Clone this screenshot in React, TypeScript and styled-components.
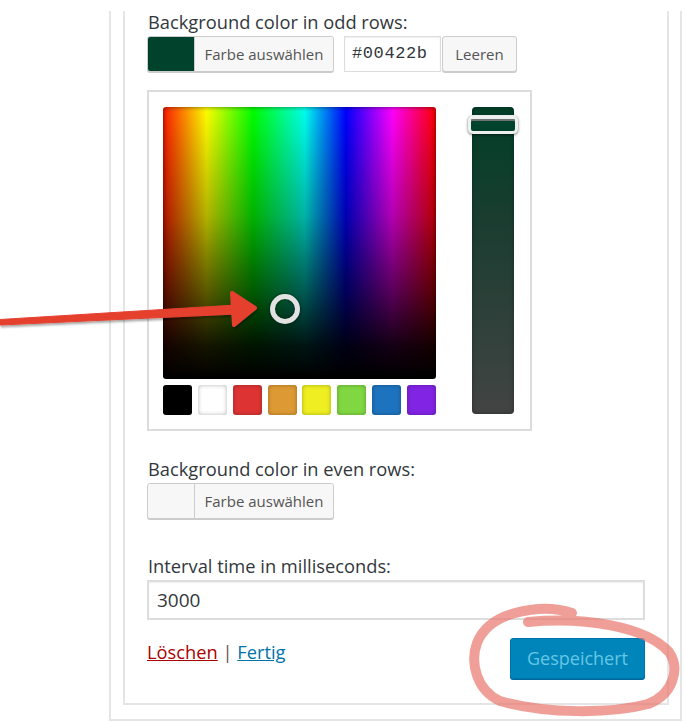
import styled, { createGlobalStyle } from 'styled-components';

const GlobalStyle = createGlobalStyle`
  html, body {
    margin: 0;
    padding: 0;
    background: #fff;
  }
  body {
    font-family: 'Open Sans', 'Noto Sans', sans-serif;
    color: #32373c;
  }
`;

const Page = styled.div`
  position: relative;
  width: 685px;
  height: 722px;
  overflow: hidden;
`;

const Widget = styled.div`
  box-sizing: border-box;
  width: 573px;
  margin-left: 109px;
  padding: 0 11px 14px 12px;
  border: 2px solid #e5e5e5;
  border-top: none;
`;

const WidgetInside = styled.div`
  box-sizing: border-box;
  padding: 0 22px 24px 22px;
  border: 2px solid #e5e5e5;
  border-top: none;
`;

const Label = styled.div<{ $top: number }>`
  margin-top: ${(p) => p.$top}px;
  margin-bottom: 3px;
  padding-left: 1px;
  font-size: 18.3px;
  line-height: 22px;
  color: #32373c;
`;

const ColorRow = styled.div`
  display: flex;
  align-items: flex-start;
  height: 37px;
`;

const ColorButton = styled.div`
  box-sizing: border-box;
  display: flex;
  width: 187px;
  height: 36px;
  border: 1px solid #ccc;
  border-radius: 3px;
  box-shadow: 0 1px 0 #ccc;
  overflow: hidden;
  background: #f7f7f7;
`;

const Swatch = styled.div<{ $color: string }>`
  width: 46px;
  background: ${(p) => p.$color};
`;

const ColorText = styled.span`
  flex: 1;
  border-left: 1px solid #ccc;
  background: #f7f7f7;
  color: #555;
  font-size: 15px;
  line-height: 34px;
  text-align: center;
`;

const HexInput = styled.div`
  box-sizing: border-box;
  width: 97px;
  height: 36px;
  margin-left: 10px;
  padding-left: 7px;
  border: 1px solid #ddd;
  box-shadow: inset 0 1px 2px rgba(0, 0, 0, 0.07);
  font-family: 'Liberation Mono', 'DejaVu Sans Mono', monospace;
  font-size: 17px;
  letter-spacing: 0.6px;
  line-height: 33px;
  color: #32373c;
`;

const ClearButton = styled.div`
  box-sizing: border-box;
  width: 75px;
  height: 36px;
  margin-left: 1px;
  border: 1px solid #ccc;
  border-radius: 3px;
  box-shadow: 0 1px 0 #ccc;
  background: #f7f7f7;
  color: #555;
  font-size: 15px;
  line-height: 34px;
  text-align: center;
`;

const Picker = styled.div`
  box-sizing: border-box;
  display: flex;
  justify-content: space-between;
  width: 385px;
  margin-top: 17px;
  padding: 15px 16px 14px 14px;
  border: 2px solid #dcdcdc;
`;

const PickerMain = styled.div`
  display: flex;
  flex-direction: column;
  gap: 6px;
  width: 273px;
`;

const Square = styled.div`
  position: relative;
  height: 272px;
  border-radius: 3px;
  background:
    linear-gradient(
      to bottom,
      rgba(0, 0, 0, 0) 0%,
      rgba(0, 0, 0, 0.3) 40%,
      rgba(0, 0, 0, 0.65) 68%,
      rgba(0, 0, 0, 0.92) 88%,
      #000 100%
    ),
    linear-gradient(
      to right,
      #ff1a00 0%,
      #ffff00 16%,
      #00ff00 33%,
      #00ffee 52%,
      #0000ff 67%,
      #ff00ff 84%,
      #ff0000 100%
    );
  box-shadow: inset 0 0 5px rgba(0, 0, 0, 0.55);
`;

const SquareHandle = styled.div`
  position: absolute;
  left: 107px;
  top: 187px;
  box-sizing: border-box;
  width: 30px;
  height: 30px;
  border: 5px solid #e2e2e2;
  border-radius: 50%;
  box-shadow: 0 0 3px rgba(0, 0, 0, 0.5), inset 0 0 3px rgba(0, 0, 0, 0.5);
`;

const Palette = styled.div`
  display: flex;
  justify-content: space-between;
`;

const PaletteSwatch = styled.div<{ $color: string }>`
  width: 29px;
  height: 30px;
  border-radius: 3px;
  background: ${(p) => p.$color};
  box-shadow: inset 0 0 4px rgba(0, 0, 0, 0.3);
`;

const Slider = styled.div`
  position: relative;
  width: 42px;
  height: 307px;
  border-radius: 4px;
  background: linear-gradient(to bottom, #003f28 0%, #1c3d31 40%, #424443 100%);
  box-shadow: inset 0 0 4px rgba(0, 0, 0, 0.35);
`;

const SliderHandle = styled.div`
  position: absolute;
  left: -4px;
  top: 8px;
  box-sizing: border-box;
  width: 50px;
  height: 19px;
  border: 3px solid #eef0ef;
  border-top-width: 4px;
  border-radius: 5px;
  background: #00422b;
  box-shadow: 0 1px 3px rgba(0, 0, 0, 0.55), inset 0 2px 0 #6f7371;
`;

const TextInput = styled.div`
  box-sizing: border-box;
  width: 498px;
  height: 40px;
  padding-left: 8px;
  border: 2px solid #ddd;
  box-shadow: inset 0 1px 2px rgba(0, 0, 0, 0.07);
  font-size: 19px;
  line-height: 36px;
  color: #32373c;
`;

const Footer = styled.div`
  display: flex;
  justify-content: space-between;
  align-items: flex-start;
  margin-top: 18px;
`;

const Links = styled.div`
  padding-top: 3px;
  font-size: 18.3px;
  line-height: 22px;
  color: #555;
`;

const ActionLink = styled.a<{ $color: string }>`
  color: ${(p) => p.$color};
  text-decoration: underline;
`;

const SaveButton = styled.div`
  box-sizing: border-box;
  width: 135px;
  height: 41px;
  border: 1px solid #0073aa;
  border-radius: 3px;
  background: #0085ba;
  box-shadow: 0 1px 0 #006799;
  color: #66c6e4;
  font-size: 18px;
  line-height: 39px;
  text-align: center;
`;

const Annotations = styled.svg`
  position: absolute;
  left: 0;
  top: 0;
  pointer-events: none;
`;

const paletteColors = ['#000000', '#ffffff', '#dd3333', '#dd9933', '#eeee22', '#81d742', '#1e73be', '#8224e3'];

export default function App() {
  return (
    <Page>
      <GlobalStyle />
      <Widget>
        <WidgetInside>
          <Label $top={11}>Background color in odd rows:</Label>
          <ColorRow>
            <ColorButton>
              <Swatch $color="#00422b" />
              <ColorText>Farbe auswählen</ColorText>
            </ColorButton>
            <HexInput>#00422b</HexInput>
            <ClearButton>Leeren</ClearButton>
          </ColorRow>

          <Picker>
            <PickerMain>
              <Square>
                <SquareHandle />
              </Square>
              <Palette>
                {paletteColors.map((c) => (
                  <PaletteSwatch key={c} $color={c} />
                ))}
              </Palette>
            </PickerMain>
            <Slider>
              <SliderHandle />
            </Slider>
          </Picker>

          <Label $top={27}>Background color in even rows:</Label>
          <ColorRow>
            <ColorButton>
              <Swatch $color="#f7f7f7" />
              <ColorText>Farbe auswählen</ColorText>
            </ColorButton>
          </ColorRow>

          <Label $top={35}>Interval time in milliseconds:</Label>
          <TextInput>3000</TextInput>

          <Footer>
            <Links>
              <ActionLink $color="#a00">Löschen</ActionLink> | <ActionLink $color="#0073aa">Fertig</ActionLink>
            </Links>
            <SaveButton>Gespeichert</SaveButton>
          </Footer>
        </WidgetInside>
      </Widget>

      <Annotations width="685" height="722" viewBox="0 0 685 722">
        <defs>
          <filter id="arrowShadow" x="-10%" y="-50%" width="120%" height="200%">
            <feDropShadow dx="1" dy="2" stdDeviation="1.2" floodColor="#000" floodOpacity="0.35" />
          </filter>
        </defs>
        <g filter="url(#arrowShadow)" fill="#e5412f" stroke="#e5412f" strokeLinejoin="round">
          <path d="M0 319.5 L236 305 L236 314 L0 325 Z" strokeWidth="1" />
          <path d="M232 293 L255 308 L234 325 Z" strokeWidth="4" />
        </g>
        <path
          d="M528 622 C 585 617, 645 626, 669 652 C 680 668, 674 694, 648 704 C 610 714, 545 714, 500 701 C 476 690, 470 662, 477 643 C 485 623, 505 612, 538 609 C 552 608, 563 610, 572 613"
          fill="none"
          stroke="#e8766c"
          strokeOpacity="0.7"
          strokeWidth="10"
          strokeLinecap="round"
        />
      </Annotations>
    </Page>
  );
}
